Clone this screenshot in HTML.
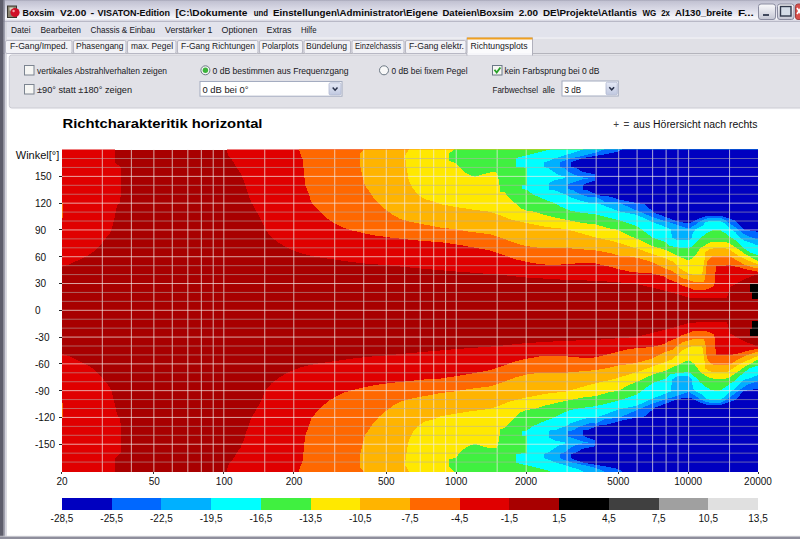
<!DOCTYPE html>
<html lang="de">
<head>
<meta charset="utf-8">
<title>Boxsim V2.00 - VISATON-Edition</title>
<style>
html,body{margin:0;padding:0;background:#fff;}
body{width:800px;height:539px;overflow:hidden;position:relative;font-family:"Liberation Sans",sans-serif;}
svg text{font-family:"Liberation Sans",sans-serif;fill:#000;}
.ax{font-size:10px;fill:#101010;}
.ui{font-size:8.6px;fill:#18181c;}
.ttl{font-size:9.5px;font-weight:bold;fill:#0a0a0a;}
.h1{font-size:13.4px;font-weight:bold;fill:#000;}
.note{font-size:10px;fill:#101010;}
</style>
</head>
<body>
<svg width="800" height="539" viewBox="0 0 800 539" style="position:absolute;left:0;top:0">
<defs>
<linearGradient id="tb" x1="0" y1="0" x2="0" y2="1">
<stop offset="0" stop-color="#a4a4b6"/><stop offset="0.06" stop-color="#c2c2d2"/><stop offset="0.3" stop-color="#d2d2e0"/><stop offset="0.6" stop-color="#e6e6f0"/><stop offset="0.85" stop-color="#f8f8fb"/><stop offset="0.93" stop-color="#dcdce6"/><stop offset="1" stop-color="#a8a8b8"/>
</linearGradient>
<linearGradient id="btn" x1="0" y1="0" x2="0" y2="1"><stop offset="0" stop-color="#fafafc"/><stop offset="1" stop-color="#c4c6d4"/></linearGradient>
<linearGradient id="ddb" x1="0" y1="0" x2="0" y2="1"><stop offset="0" stop-color="#e6eaf6"/><stop offset="1" stop-color="#c0c8e0"/></linearGradient>
</defs>
<!-- window background -->
<rect x="0" y="0" width="800" height="539" fill="#ffffff"/>
<!-- title bar -->
<rect x="0" y="0" width="800" height="22" fill="url(#tb)"/>
<!-- menu bar -->
<rect x="0" y="22" width="800" height="16" fill="#e2e3ec"/>
<rect x="0" y="37.5" width="800" height="1" fill="#f4f4f8"/>
<!-- tab strip -->
<rect x="0" y="38.5" width="800" height="15" fill="#e0e0e6"/>
<rect x="0" y="53" width="800" height="1" fill="#b4b4bc"/>
<rect x="0" y="54" width="800" height="56" fill="#fcfcfe"/>
<!-- panel -->
<rect x="9.3" y="55" width="800" height="53" rx="2.5" fill="#e1e1e7" stroke="#cacad2" stroke-width="1"/>
<!-- left border -->
<rect x="0" y="0" width="3.7" height="539" fill="#5e5e6c"/>
<rect x="3.7" y="0" width="1.2" height="539" fill="#9090a0"/>
<rect x="4.9" y="22" width="2" height="517" fill="#d6d6de"/>
<!-- bottom border -->
<rect x="0" y="535.8" width="800" height="1" fill="#d0d0d8"/>
<rect x="0" y="536.7" width="800" height="2.3" fill="#8e8e9c"/>

<!-- icon -->
<g>
<rect x="7.5" y="6" width="9" height="11.5" fill="#8a8470" stroke="#3a3830" stroke-width="1"/>
<rect x="9.5" y="7.5" width="4" height="3" fill="#d8d4c0"/>
<circle cx="15" cy="12.5" r="4.6" fill="#d01028"/>
<circle cx="13.6" cy="11" r="1.2" fill="#f8a0a8"/>
</g>
<text class="ttl" x="22.5" y="15.7" textLength="32" lengthAdjust="spacingAndGlyphs">Boxsim</text>
<text class="ttl" x="60" y="15.7" textLength="26.25" lengthAdjust="spacingAndGlyphs">V2.00</text>
<text class="ttl" x="90.5" y="15.7" textLength="3.75" lengthAdjust="spacingAndGlyphs">-</text>
<text class="ttl" x="97.5" y="15.7" textLength="72.5" lengthAdjust="spacingAndGlyphs">VISATON-Edition</text>
<text class="ttl" x="175.5" y="15.7" textLength="72" lengthAdjust="spacingAndGlyphs">[C:\Dokumente</text>
<text class="ttl" x="253.75" y="15.7" textLength="14.25" lengthAdjust="spacingAndGlyphs">und</text>
<text class="ttl" x="273" y="15.7" textLength="165" lengthAdjust="spacingAndGlyphs">Einstellungen\Administrator\Eigene</text>
<text class="ttl" x="442.5" y="15.7" textLength="71.25" lengthAdjust="spacingAndGlyphs">Dateien\Boxsim</text>
<text class="ttl" x="518.75" y="15.7" textLength="19.25" lengthAdjust="spacingAndGlyphs">2.00</text>
<text class="ttl" x="543" y="15.7" textLength="94" lengthAdjust="spacingAndGlyphs">DE\Projekte\Atlantis</text>
<text class="ttl" x="642.5" y="15.7" textLength="13.75" lengthAdjust="spacingAndGlyphs">WG</text>
<text class="ttl" x="661.25" y="15.7" textLength="8.75" lengthAdjust="spacingAndGlyphs">2x</text>
<text class="ttl" x="675" y="15.7" textLength="57.5" lengthAdjust="spacingAndGlyphs">Al130_breite</text>
<text class="ttl" x="738" y="15.7" textLength="15.75" lengthAdjust="spacingAndGlyphs">F...</text>
<!-- window buttons -->
<rect x="758.5" y="4" width="17" height="15.5" rx="2.5" fill="url(#btn)" stroke="#8a8ca0" stroke-width="1"/>
<rect x="763" y="14" width="6" height="2" fill="#40485c"/>
<rect x="777.5" y="4" width="16.5" height="15.5" rx="2.5" fill="url(#btn)" stroke="#8a8ca0" stroke-width="1"/>
<rect x="780.5" y="6.5" width="10.5" height="9.5" fill="#d4dce8" stroke="#30384c" stroke-width="1.4"/>
<rect x="795.5" y="4" width="10" height="15.5" rx="2.5" fill="#d8504c" stroke="#a04040" stroke-width="1"/>
<path d="M797 8 L801 14 M801 8 L797 14" stroke="#fff" stroke-width="1.6"/>

<!-- menu -->
<text class="ui" x="11" y="32.6" textLength="19.5" lengthAdjust="spacingAndGlyphs">Datei</text>
<text class="ui" x="40.5" y="32.6" textLength="40.5" lengthAdjust="spacingAndGlyphs">Bearbeiten</text>
<text class="ui" x="90.5" y="32.6" textLength="64.5" lengthAdjust="spacingAndGlyphs">Chassis &amp; Einbau</text>
<text class="ui" x="165" y="32.6" textLength="47.5" lengthAdjust="spacingAndGlyphs">Verstärker 1</text>
<text class="ui" x="221.5" y="32.6" textLength="36" lengthAdjust="spacingAndGlyphs">Optionen</text>
<text class="ui" x="266.5" y="32.6" textLength="25" lengthAdjust="spacingAndGlyphs">Extras</text>
<text class="ui" x="301" y="32.6" textLength="15.5" lengthAdjust="spacingAndGlyphs">Hilfe</text>

<!-- tabs -->
<g fill="#f2f2f6" stroke="#b8b8c4" stroke-width="1">
<rect x="5.5" y="40.5" width="66.5" height="13" rx="1.5"/>
<rect x="73.5" y="40.5" width="52.5" height="13" rx="1.5"/>
<rect x="127.5" y="40.5" width="48.5" height="13" rx="1.5"/>
<rect x="177.5" y="40.5" width="80.5" height="13" rx="1.5"/>
<rect x="259.5" y="40.5" width="43" height="13" rx="1.5"/>
<rect x="304" y="40.5" width="46.5" height="13" rx="1.5"/>
<rect x="352" y="40.5" width="52" height="13" rx="1.5"/>
<rect x="405.5" y="40.5" width="60.5" height="13" rx="1.5"/>
</g>
<rect x="467" y="38" width="65.5" height="17" fill="#fbfbfd" stroke="#b0b0bc" stroke-width="1"/>
<rect x="467" y="37.5" width="65.5" height="2" fill="#f0a020"/>
<rect x="467.5" y="53" width="64.5" height="2.5" fill="#f6f6fa"/>
<text class="ui" x="10" y="49.3" textLength="58" lengthAdjust="spacingAndGlyphs">F-Gang/Imped.</text>
<text class="ui" x="76" y="49.3" textLength="47.5" lengthAdjust="spacingAndGlyphs">Phasengang</text>
<text class="ui" x="131" y="49.3" textLength="42" lengthAdjust="spacingAndGlyphs">max. Pegel</text>
<text class="ui" x="181" y="49.3" textLength="74" lengthAdjust="spacingAndGlyphs">F-Gang Richtungen</text>
<text class="ui" x="262" y="49.3" textLength="36.5" lengthAdjust="spacingAndGlyphs">Polarplots</text>
<text class="ui" x="306" y="49.3" textLength="41" lengthAdjust="spacingAndGlyphs">Bündelung</text>
<text class="ui" x="355" y="49.3" textLength="46" lengthAdjust="spacingAndGlyphs">Einzelchassis</text>
<text class="ui" x="409" y="49.3" textLength="55" lengthAdjust="spacingAndGlyphs">F-Gang elektr.</text>
<text class="ui" x="470.5" y="48.8" textLength="57" lengthAdjust="spacingAndGlyphs">Richtungsplots</text>

<!-- controls -->
<rect x="24.5" y="65.5" width="9.5" height="9.5" fill="#f6f6f4" stroke="#7c8490" stroke-width="1"/>
<text class="ui" x="37" y="73.5" textLength="130" lengthAdjust="spacingAndGlyphs">vertikales Abstrahlverhalten zeigen</text>
<rect x="24.5" y="84.5" width="9.5" height="9.5" fill="#f6f6f4" stroke="#7c8490" stroke-width="1"/>
<text class="ui" x="37" y="92.9" textLength="95" lengthAdjust="spacingAndGlyphs">±90° statt ±180° zeigen</text>

<circle cx="205.4" cy="70.3" r="4.5" fill="#f4f6f4" stroke="#6c7884" stroke-width="1"/>
<circle cx="205.4" cy="70.3" r="2.7" fill="#3cb43c"/>
<text class="ui" x="212.5" y="73.5" textLength="136" lengthAdjust="spacingAndGlyphs">0 dB bestimmen aus Frequenzgang</text>
<rect x="200" y="81.5" width="142" height="14.7" fill="#ffffff" stroke="#a4acc0" stroke-width="1"/>
<rect x="329" y="82.8" width="12" height="12.2" rx="1.5" fill="url(#ddb)" stroke="#b0b8d0" stroke-width="0.8"/>
<path d="M332.7 87.6 L335.1 90.2 L337.5 87.6" fill="none" stroke="#283048" stroke-width="1.5"/>
<text class="ui" x="202.5" y="92.9" textLength="46" lengthAdjust="spacingAndGlyphs">0 dB bei 0°</text>

<circle cx="384" cy="70.3" r="4.5" fill="#f8f8f8" stroke="#6c7884" stroke-width="1"/>
<text class="ui" x="391.5" y="73.5" textLength="76" lengthAdjust="spacingAndGlyphs">0 dB bei fixem Pegel</text>

<rect x="492.5" y="65.5" width="9.5" height="9.5" fill="#f6f6f4" stroke="#6c7888" stroke-width="1"/>
<path d="M494.5 69.8 L496.7 72.6 L500.4 67.4" fill="none" stroke="#28a028" stroke-width="1.8"/>
<text class="ui" x="504.5" y="73.5" textLength="95" lengthAdjust="spacingAndGlyphs">kein Farbsprung bei 0 dB</text>
<text class="ui" x="492.5" y="92.5" textLength="62.5" lengthAdjust="spacingAndGlyphs" style="white-space:pre">Farbwechsel  alle</text>
<rect x="562" y="81" width="56.3" height="15" fill="#ffffff" stroke="#a4acc0" stroke-width="1"/>
<rect x="606" y="82.2" width="11.3" height="12.6" rx="1.5" fill="url(#ddb)" stroke="#b0b8d0" stroke-width="0.8"/>
<path d="M609.3 87.2 L611.7 89.8 L614.1 87.2" fill="none" stroke="#283048" stroke-width="1.5"/>
<text class="ui" x="564.5" y="92.5" textLength="16.5" lengthAdjust="spacingAndGlyphs">3 dB</text>

<!-- headings -->
<text class="h1" x="62.5" y="127.5" textLength="200" lengthAdjust="spacingAndGlyphs">Richtcharakteritik horizontal</text>
<text class="note" x="613.2" y="128.3" style="fill:#404040">+</text>
<text class="note" x="623.6" y="128.3" style="fill:#404040">=</text>
<text class="note" x="633.3" y="128.3" textLength="124.2" lengthAdjust="spacingAndGlyphs">aus Hörersicht nach rechts</text>
</svg>
<svg width="800" height="539" viewBox="0 0 800 539" style="position:absolute;left:0;top:0" shape-rendering="crispEdges">
<defs><clipPath id="pc"><rect x="62" y="149.5" width="696" height="322.4"/></clipPath></defs>
<g clip-path="url(#pc)">
<rect x="62" y="149.5" width="696" height="322.4" fill="#a80000"/>
<polygon points="114.5,147.5 114.5,149.5 115.5,163.0 120.5,167.0 121.0,176.0 121.0,193.0 120.0,202.0 117.0,206.0 116.0,211.0 114.0,220.0 112.0,228.0 110.0,233.0 106.0,238.0 100.0,245.5 95.0,250.5 87.5,255.5 77.5,260.5 70.0,264.0 62.0,267.0 60.0,267.0 60.0,147.5" fill="#e00000"/>
<polygon points="227.0,147.5 227.0,149.5 228.0,155.5 232.5,160.5 236.0,166.8 240.5,173.0 243.8,180.5 246.0,188.0 248.8,195.5 251.0,201.8 254.5,208.0 258.8,215.5 262.5,223.0 266.0,230.5 271.0,236.8 279.0,243.0 287.5,248.0 300.0,253.0 315.0,256.8 332.5,259.2 350.0,261.8 365.0,263.5 390.0,265.5 410.0,267.5 435.0,269.8 456.0,271.5 497.0,274.5 526.0,277.5 560.0,279.5 600.0,281.0 635.0,283.5 660.0,289.5 677.0,294.0 688.0,297.5 700.0,298.4 727.0,298.4 730.0,287.0 745.0,279.0 758.0,274.0 760.0,274.0 760.0,147.5" fill="#e00000"/>
<polygon points="298.8,147.5 298.8,149.5 301.0,155.5 303.0,160.5 303.8,173.0 305.5,185.5 308.8,194.0 311.0,201.8 315.0,206.8 320.0,211.8 325.0,216.8 330.0,220.5 336.0,224.2 343.8,228.0 352.5,230.5 362.5,233.0 375.0,235.5 390.0,237.5 405.0,239.2 422.5,241.0 440.0,242.0 455.0,244.2 470.0,246.8 490.0,250.5 505.0,255.5 515.0,259.2 526.0,261.8 540.0,264.2 552.0,265.0 567.0,264.2 580.0,263.0 590.0,262.5 596.0,263.5 610.0,266.8 619.0,269.2 630.0,271.8 640.0,272.7 652.0,273.5 664.5,276.7 668.0,279.0 677.5,282.8 682.5,285.7 688.5,287.7 694.0,289.8 705.0,289.8 710.0,288.0 714.3,285.7 716.0,266.0 729.5,265.3 738.0,267.0 746.0,269.4 754.0,271.0 758.0,271.8 760.0,271.8 760.0,147.5" fill="#ff6800"/>
<polygon points="60.0,203.0 63.2,203.0 63.2,218.0 60.0,218.0" fill="#ff6800"/>
<polygon points="363.8,147.5 363.8,149.5 360.0,153.0 360.0,165.0 361.8,173.0 365.0,185.5 369.5,191.8 373.8,198.0 378.8,203.5 383.8,208.0 388.8,211.8 393.8,215.5 400.0,218.8 410.0,221.8 420.0,223.8 430.0,225.5 440.0,227.5 455.0,229.2 470.0,231.8 490.0,234.2 505.0,239.2 515.0,243.0 526.0,246.0 540.0,248.0 567.0,248.0 580.0,249.2 596.0,250.5 610.0,253.0 619.0,255.5 630.0,256.5 640.0,258.5 652.0,262.0 659.6,266.0 665.6,268.6 672.6,271.0 677.5,275.0 682.4,278.4 688.5,280.0 694.0,282.0 703.7,282.0 705.3,277.5 706.0,269.4 707.0,262.0 710.0,258.0 713.5,255.5 728.0,255.5 731.4,257.0 738.0,261.2 746.0,265.3 754.0,267.8 758.0,268.6 760.0,268.6 760.0,147.5" fill="#ffb400"/>
<polygon points="408.8,147.5 408.8,149.5 405.0,155.5 406.0,165.0 408.8,180.5 412.5,188.0 417.5,194.2 425.0,199.2 435.0,201.8 440.0,204.2 455.0,206.8 470.0,209.2 490.0,211.8 497.5,214.2 510.0,219.2 526.0,223.0 545.0,226.8 567.0,229.2 580.0,233.0 596.0,237.5 610.0,240.5 619.0,243.0 630.0,246.5 640.0,249.5 652.0,254.0 659.6,256.5 665.6,258.5 672.6,261.5 677.5,266.0 682.4,270.2 688.5,273.5 694.0,275.0 702.0,275.0 703.0,269.4 704.5,259.6 705.3,252.2 708.6,249.8 713.5,248.2 725.0,248.2 729.5,249.8 738.0,255.5 746.0,259.6 754.0,262.9 758.0,264.5 760.0,264.5 760.0,147.5" fill="#ffe800"/>
<polygon points="453.8,147.5 453.8,149.5 448.8,154.0 448.8,161.0 456.0,163.0 458.8,166.8 463.8,171.8 470.0,175.0 475.0,176.8 482.5,174.2 490.0,172.5 496.0,172.2 498.0,175.5 499.5,185.0 500.0,191.5 505.0,192.5 506.5,195.0 511.0,199.5 515.0,203.0 520.0,208.0 526.0,210.5 535.0,211.8 545.0,215.0 557.5,218.0 570.0,220.5 582.5,223.0 596.0,224.5 607.5,228.0 618.5,230.0 630.0,236.0 637.0,238.8 652.5,246.0 665.6,250.0 677.5,255.5 682.4,258.0 688.5,260.4 694.0,257.0 697.0,253.0 700.4,248.2 705.3,245.0 710.0,242.4 716.7,241.6 725.0,241.6 729.5,243.3 738.0,249.0 746.0,254.7 754.0,258.8 758.0,261.2 760.0,261.2 760.0,147.5" fill="#40f040"/>
<polygon points="550.0,147.5 550.0,149.5 533.8,153.6 515.6,158.0 515.6,166.8 520.6,167.0 527.0,168.0 527.0,185.0 522.0,185.1 522.0,189.0 527.0,190.0 532.5,194.2 541.0,198.0 547.5,200.5 553.8,203.0 561.0,206.8 570.0,210.5 580.0,212.5 596.0,214.5 618.5,220.0 637.0,226.2 645.0,232.0 652.5,237.5 665.6,242.0 670.0,246.0 677.5,247.5 688.5,248.5 692.5,246.0 697.5,241.2 701.0,237.5 706.0,233.8 711.0,230.6 715.0,230.0 720.0,230.0 725.0,233.0 730.0,236.9 735.0,240.0 738.8,243.8 743.8,248.0 750.0,252.5 758.0,255.0 760.0,255.0 760.0,147.5" fill="#00ffff"/>
<polygon points="583.0,147.5 583.0,149.5 576.0,152.0 569.5,153.8 563.0,156.0 553.8,158.6 550.0,160.5 543.8,162.4 543.8,166.8 549.0,168.6 553.8,171.8 558.8,175.0 565.0,176.5 565.0,178.0 555.0,180.0 550.0,182.4 549.4,183.0 549.4,190.0 555.0,190.5 565.0,194.2 571.0,197.4 580.0,200.5 590.0,203.0 596.0,203.0 605.0,206.0 618.5,211.2 637.0,215.0 652.5,222.0 665.6,227.0 670.5,229.0 672.5,238.0 677.5,240.0 688.5,240.0 691.5,238.5 693.0,232.0 695.5,229.5 702.5,225.6 706.0,221.9 711.0,220.6 720.0,220.6 725.0,223.8 730.0,228.8 735.0,231.9 738.8,236.2 743.8,240.6 750.0,242.5 758.0,245.6 760.0,245.6 760.0,147.5" fill="#00b0ff"/>
<polygon points="604.0,147.5 604.0,149.5 595.0,152.8 586.0,155.0 577.5,157.0 570.0,158.6 565.0,160.5 560.0,162.4 560.0,166.8 565.0,168.6 568.8,171.8 575.0,175.0 582.5,177.4 590.0,178.3 582.5,179.2 575.0,181.8 568.0,184.0 568.0,189.0 573.8,190.5 580.0,194.2 590.0,197.4 596.0,197.0 600.0,199.2 605.0,201.8 618.5,202.5 637.0,210.6 652.5,217.0 665.6,221.2 677.5,225.0 688.5,228.8 695.0,225.0 700.0,221.2 706.0,218.8 711.0,217.5 720.0,217.5 725.0,220.0 730.0,223.8 735.0,227.0 738.8,230.0 743.8,233.8 750.0,236.9 758.0,239.4 760.0,239.4 760.0,147.5" fill="#0068ff"/>
<polygon points="622.0,147.5 622.0,149.5 616.0,152.2 604.0,154.5 590.0,156.8 581.0,158.6 576.0,160.5 571.0,162.4 571.0,166.8 576.0,168.0 582.5,171.8 595.0,174.2 595.0,180.5 587.5,183.0 582.5,185.0 582.5,190.0 587.5,190.5 595.0,193.6 600.0,195.5 605.0,195.5 615.0,198.0 618.5,199.4 630.0,201.8 637.0,203.0 645.0,204.2 650.0,209.2 652.5,210.6 655.0,213.0 665.0,216.8 675.0,220.5 685.0,223.0 690.0,223.0 695.0,220.5 700.0,218.0 707.5,215.5 720.0,215.5 727.5,218.0 735.0,220.5 740.0,225.6 743.8,229.4 750.0,230.6 758.0,231.9 760.0,231.9 760.0,147.5" fill="#0000c0"/>
<polygon points="749.7,284.3 760.0,284.3 760.0,299.2 752.4,299.2 752.4,291.5 749.7,291.5" fill="#000000"/>
<polygon points="114.5,473.1 114.5,471.1 115.5,457.6 120.5,453.6 121.0,444.6 121.0,427.6 120.0,418.6 117.0,414.6 116.0,409.6 114.0,400.6 112.0,392.6 110.0,387.6 106.0,382.6 100.0,375.1 95.0,370.1 87.5,365.1 77.5,360.1 70.0,356.6 62.0,353.6 60.0,353.6 60.0,473.1" fill="#e00000"/>
<polygon points="227.0,473.1 227.0,471.1 228.0,465.1 232.5,460.1 236.0,453.9 240.5,447.6 243.8,440.1 246.0,432.6 248.8,425.1 251.0,418.9 254.5,412.6 258.8,405.1 262.5,397.6 266.0,390.1 271.0,383.9 279.0,377.6 287.5,372.6 300.0,367.6 315.0,363.9 332.5,361.4 350.0,358.9 365.0,357.1 390.0,355.1 410.0,353.1 435.0,350.9 456.0,349.1 497.0,346.1 526.0,343.1 560.0,341.1 600.0,339.6 635.0,337.1 660.0,331.1 677.0,326.6 688.0,323.1 700.0,322.2 727.0,322.2 730.0,333.6 745.0,341.6 758.0,346.6 760.0,346.6 760.0,473.1" fill="#e00000"/>
<polygon points="298.8,473.1 298.8,471.1 301.0,465.1 303.0,460.1 303.8,447.6 305.5,435.1 308.8,426.6 311.0,418.9 315.0,413.9 320.0,408.9 325.0,403.9 330.0,400.1 336.0,396.4 343.8,392.6 352.5,390.1 362.5,387.6 375.0,385.1 390.0,383.1 405.0,381.4 422.5,379.6 440.0,378.6 455.0,376.4 470.0,373.9 490.0,370.1 505.0,365.1 515.0,361.4 526.0,358.9 540.0,356.4 552.0,355.6 567.0,356.4 580.0,357.6 590.0,358.1 596.0,357.1 610.0,353.9 619.0,351.4 630.0,348.9 640.0,347.9 652.0,347.1 664.5,343.9 668.0,341.6 677.5,337.8 682.5,334.9 688.5,332.9 694.0,330.8 705.0,330.8 710.0,332.6 714.3,334.9 716.0,354.6 729.5,355.3 738.0,353.6 746.0,351.2 754.0,349.6 758.0,348.8 760.0,348.8 760.0,473.1" fill="#ff6800"/>
<polygon points="60.0,417.6 63.2,417.6 63.2,402.6 60.0,402.6" fill="#ff6800"/>
<polygon points="363.8,473.1 363.8,471.1 360.0,467.6 360.0,455.6 361.8,447.6 365.0,435.1 369.5,428.9 373.8,422.6 378.8,417.1 383.8,412.6 388.8,408.9 393.8,405.1 400.0,401.9 410.0,398.9 420.0,396.9 430.0,395.1 440.0,393.1 455.0,391.4 470.0,388.9 490.0,386.4 505.0,381.4 515.0,377.6 526.0,374.6 540.0,372.6 567.0,372.6 580.0,371.4 596.0,370.1 610.0,367.6 619.0,365.1 630.0,364.1 640.0,362.1 652.0,358.6 659.6,354.6 665.6,352.0 672.6,349.6 677.5,345.6 682.4,342.2 688.5,340.6 694.0,338.6 703.7,338.6 705.3,343.1 706.0,351.2 707.0,358.6 710.0,362.6 713.5,365.1 728.0,365.1 731.4,363.6 738.0,359.4 746.0,355.3 754.0,352.8 758.0,352.0 760.0,352.0 760.0,473.1" fill="#ffb400"/>
<polygon points="408.8,473.1 408.8,471.1 405.0,465.1 406.0,455.6 408.8,440.1 412.5,432.6 417.5,426.4 425.0,421.4 435.0,418.9 440.0,416.4 455.0,413.9 470.0,411.4 490.0,408.9 497.5,406.4 510.0,401.4 526.0,397.6 545.0,393.9 567.0,391.4 580.0,387.6 596.0,383.1 610.0,380.1 619.0,377.6 630.0,374.1 640.0,371.1 652.0,366.6 659.6,364.1 665.6,362.1 672.6,359.1 677.5,354.6 682.4,350.4 688.5,347.1 694.0,345.6 702.0,345.6 703.0,351.2 704.5,361.0 705.3,368.4 708.6,370.8 713.5,372.4 725.0,372.4 729.5,370.8 738.0,365.1 746.0,361.0 754.0,357.7 758.0,356.1 760.0,356.1 760.0,473.1" fill="#ffe800"/>
<polygon points="453.8,473.1 453.8,471.1 448.8,466.6 448.8,459.6 456.0,457.6 458.8,453.9 463.8,448.9 470.0,445.6 475.0,443.9 482.5,446.4 490.0,448.1 496.0,448.4 498.0,445.1 499.5,435.6 500.0,429.1 505.0,428.1 506.5,425.6 511.0,421.1 515.0,417.6 520.0,412.6 526.0,410.1 535.0,408.9 545.0,405.6 557.5,402.6 570.0,400.1 582.5,397.6 596.0,396.1 607.5,392.6 618.5,390.6 630.0,384.6 637.0,381.9 652.5,374.6 665.6,370.6 677.5,365.1 682.4,362.6 688.5,360.2 694.0,363.6 697.0,367.6 700.4,372.4 705.3,375.6 710.0,378.2 716.7,379.0 725.0,379.0 729.5,377.3 738.0,371.6 746.0,365.9 754.0,361.8 758.0,359.4 760.0,359.4 760.0,473.1" fill="#40f040"/>
<polygon points="550.0,473.1 550.0,471.1 533.8,467.0 515.6,462.6 515.6,453.9 520.6,453.6 527.0,452.6 527.0,435.6 522.0,435.5 522.0,431.6 527.0,430.6 532.5,426.4 541.0,422.6 547.5,420.1 553.8,417.6 561.0,413.9 570.0,410.1 580.0,408.1 596.0,406.1 618.5,400.6 637.0,394.4 645.0,388.6 652.5,383.1 665.6,378.6 670.0,374.6 677.5,373.1 688.5,372.1 692.5,374.6 697.5,379.4 701.0,383.1 706.0,386.9 711.0,390.0 715.0,390.6 720.0,390.6 725.0,387.6 730.0,383.7 735.0,380.6 738.8,376.9 743.8,372.6 750.0,368.1 758.0,365.6 760.0,365.6 760.0,473.1" fill="#00ffff"/>
<polygon points="583.0,473.1 583.0,471.1 576.0,468.6 569.5,466.8 563.0,464.6 553.8,462.0 550.0,460.1 543.8,458.2 543.8,453.9 549.0,452.0 553.8,448.9 558.8,445.6 565.0,444.1 565.0,442.6 555.0,440.6 550.0,438.2 549.4,437.6 549.4,430.6 555.0,430.1 565.0,426.4 571.0,423.2 580.0,420.1 590.0,417.6 596.0,417.6 605.0,414.6 618.5,409.4 637.0,405.6 652.5,398.6 665.6,393.6 670.5,391.6 672.5,379.1 677.5,376.2 688.5,376.2 691.5,378.6 693.0,388.6 695.5,391.1 702.5,395.0 706.0,398.7 711.0,400.0 720.0,400.0 725.0,396.9 730.0,391.9 735.0,388.7 738.8,384.4 743.8,380.0 750.0,378.1 758.0,375.0 760.0,375.0 760.0,473.1" fill="#00b0ff"/>
<polygon points="604.0,473.1 604.0,471.1 595.0,467.8 586.0,465.6 577.5,463.6 570.0,462.0 565.0,460.1 560.0,458.2 560.0,453.9 565.0,452.0 568.8,448.9 575.0,445.6 582.5,443.2 590.0,442.3 582.5,441.4 575.0,438.9 568.0,436.6 568.0,431.6 573.8,430.1 580.0,426.4 590.0,423.2 596.0,423.6 600.0,421.4 605.0,418.9 618.5,418.1 637.0,410.0 652.5,403.6 665.6,399.4 677.5,395.6 688.5,391.9 695.0,395.6 700.0,399.4 706.0,401.9 711.0,403.1 720.0,403.1 725.0,400.6 730.0,396.9 735.0,393.6 738.8,390.6 743.8,386.9 750.0,383.7 758.0,381.2 760.0,381.2 760.0,473.1" fill="#0068ff"/>
<polygon points="622.0,473.1 622.0,471.1 616.0,468.4 604.0,466.1 590.0,463.9 581.0,462.0 576.0,460.1 571.0,458.2 571.0,453.9 576.0,452.6 582.5,448.9 595.0,446.4 595.0,440.1 587.5,437.6 582.5,435.6 582.5,430.6 587.5,430.1 595.0,427.0 600.0,425.1 605.0,425.1 615.0,422.6 618.5,421.2 630.0,418.9 637.0,417.6 645.0,416.4 650.0,411.4 652.5,410.0 655.0,407.6 665.0,403.9 675.0,400.1 685.0,397.6 690.0,397.6 695.0,400.1 700.0,402.6 707.5,405.1 720.0,405.1 727.5,402.6 735.0,400.1 740.0,395.0 743.8,391.2 750.0,390.0 758.0,388.7 760.0,388.7 760.0,473.1" fill="#0000c0"/>
<polygon points="749.7,336.3 760.0,336.3 760.0,321.4 752.4,321.4 752.4,329.1 749.7,329.1" fill="#000000"/>
</g>
<line x1="102.32" y1="149.5" x2="102.32" y2="471.9" stroke="rgba(240,236,232,0.8)" stroke-width="0.9" shape-rendering="auto"/>
<line x1="131.36" y1="149.5" x2="131.36" y2="471.9" stroke="rgba(240,236,232,0.8)" stroke-width="0.9" shape-rendering="auto"/>
<line x1="153.88" y1="149.5" x2="153.88" y2="471.9" stroke="rgba(240,236,232,0.8)" stroke-width="0.9" shape-rendering="auto"/>
<line x1="172.28" y1="149.5" x2="172.28" y2="471.9" stroke="rgba(240,236,232,0.8)" stroke-width="0.9" shape-rendering="auto"/>
<line x1="187.84" y1="149.5" x2="187.84" y2="471.9" stroke="rgba(240,236,232,0.8)" stroke-width="0.9" shape-rendering="auto"/>
<line x1="201.32" y1="149.5" x2="201.32" y2="471.9" stroke="rgba(240,236,232,0.8)" stroke-width="0.9" shape-rendering="auto"/>
<line x1="213.21" y1="149.5" x2="213.21" y2="471.9" stroke="rgba(240,236,232,0.8)" stroke-width="0.9" shape-rendering="auto"/>
<line x1="223.84" y1="149.5" x2="223.84" y2="471.9" stroke="rgba(240,236,232,0.8)" stroke-width="0.9" shape-rendering="auto"/>
<line x1="264.76" y1="149.5" x2="264.76" y2="471.9" stroke="rgba(240,236,232,0.8)" stroke-width="0.9" shape-rendering="auto"/>
<line x1="293.80" y1="149.5" x2="293.80" y2="471.9" stroke="rgba(240,236,232,0.8)" stroke-width="0.9" shape-rendering="auto"/>
<line x1="334.72" y1="149.5" x2="334.72" y2="471.9" stroke="rgba(240,236,232,0.8)" stroke-width="0.9" shape-rendering="auto"/>
<line x1="363.76" y1="149.5" x2="363.76" y2="471.9" stroke="rgba(240,236,232,0.8)" stroke-width="0.9" shape-rendering="auto"/>
<line x1="386.28" y1="149.5" x2="386.28" y2="471.9" stroke="rgba(240,236,232,0.8)" stroke-width="0.9" shape-rendering="auto"/>
<line x1="404.68" y1="149.5" x2="404.68" y2="471.9" stroke="rgba(240,236,232,0.8)" stroke-width="0.9" shape-rendering="auto"/>
<line x1="420.24" y1="149.5" x2="420.24" y2="471.9" stroke="rgba(240,236,232,0.8)" stroke-width="0.9" shape-rendering="auto"/>
<line x1="433.72" y1="149.5" x2="433.72" y2="471.9" stroke="rgba(240,236,232,0.8)" stroke-width="0.9" shape-rendering="auto"/>
<line x1="445.61" y1="149.5" x2="445.61" y2="471.9" stroke="rgba(240,236,232,0.8)" stroke-width="0.9" shape-rendering="auto"/>
<line x1="456.24" y1="149.5" x2="456.24" y2="471.9" stroke="rgba(240,236,232,0.8)" stroke-width="0.9" shape-rendering="auto"/>
<line x1="497.16" y1="149.5" x2="497.16" y2="471.9" stroke="rgba(240,236,232,0.8)" stroke-width="0.9" shape-rendering="auto"/>
<line x1="526.20" y1="149.5" x2="526.20" y2="471.9" stroke="rgba(240,236,232,0.8)" stroke-width="0.9" shape-rendering="auto"/>
<line x1="567.12" y1="149.5" x2="567.12" y2="471.9" stroke="rgba(240,236,232,0.8)" stroke-width="0.9" shape-rendering="auto"/>
<line x1="596.16" y1="149.5" x2="596.16" y2="471.9" stroke="rgba(240,236,232,0.8)" stroke-width="0.9" shape-rendering="auto"/>
<line x1="618.68" y1="149.5" x2="618.68" y2="471.9" stroke="rgba(240,236,232,0.8)" stroke-width="0.9" shape-rendering="auto"/>
<line x1="637.08" y1="149.5" x2="637.08" y2="471.9" stroke="rgba(240,236,232,0.8)" stroke-width="0.9" shape-rendering="auto"/>
<line x1="652.64" y1="149.5" x2="652.64" y2="471.9" stroke="rgba(240,236,232,0.8)" stroke-width="0.9" shape-rendering="auto"/>
<line x1="666.12" y1="149.5" x2="666.12" y2="471.9" stroke="rgba(240,236,232,0.8)" stroke-width="0.9" shape-rendering="auto"/>
<line x1="678.01" y1="149.5" x2="678.01" y2="471.9" stroke="rgba(240,236,232,0.8)" stroke-width="0.9" shape-rendering="auto"/>
<line x1="688.64" y1="149.5" x2="688.64" y2="471.9" stroke="rgba(240,236,232,0.8)" stroke-width="0.9" shape-rendering="auto"/>
<line x1="729.56" y1="149.5" x2="729.56" y2="471.9" stroke="rgba(240,236,232,0.8)" stroke-width="0.9" shape-rendering="auto"/>
<line x1="62" y1="462.076" x2="758" y2="462.076" stroke="rgba(180,176,172,0.62)" stroke-width="0.9" shape-rendering="auto"/>
<line x1="62" y1="453.148" x2="758" y2="453.148" stroke="rgba(180,176,172,0.62)" stroke-width="0.9" shape-rendering="auto"/>
<line x1="62" y1="444.22" x2="758" y2="444.22" stroke="rgba(240,236,232,0.78)" stroke-width="0.9" shape-rendering="auto"/>
<line x1="62" y1="435.292" x2="758" y2="435.292" stroke="rgba(180,176,172,0.62)" stroke-width="0.9" shape-rendering="auto"/>
<line x1="62" y1="426.364" x2="758" y2="426.364" stroke="rgba(180,176,172,0.62)" stroke-width="0.9" shape-rendering="auto"/>
<line x1="62" y1="417.436" x2="758" y2="417.436" stroke="rgba(240,236,232,0.78)" stroke-width="0.9" shape-rendering="auto"/>
<line x1="62" y1="408.508" x2="758" y2="408.508" stroke="rgba(180,176,172,0.62)" stroke-width="0.9" shape-rendering="auto"/>
<line x1="62" y1="399.58" x2="758" y2="399.58" stroke="rgba(180,176,172,0.62)" stroke-width="0.9" shape-rendering="auto"/>
<line x1="62" y1="390.652" x2="758" y2="390.652" stroke="rgba(240,236,232,0.78)" stroke-width="0.9" shape-rendering="auto"/>
<line x1="62" y1="381.724" x2="758" y2="381.724" stroke="rgba(180,176,172,0.62)" stroke-width="0.9" shape-rendering="auto"/>
<line x1="62" y1="372.796" x2="758" y2="372.796" stroke="rgba(180,176,172,0.62)" stroke-width="0.9" shape-rendering="auto"/>
<line x1="62" y1="363.868" x2="758" y2="363.868" stroke="rgba(240,236,232,0.78)" stroke-width="0.9" shape-rendering="auto"/>
<line x1="62" y1="354.94" x2="758" y2="354.94" stroke="rgba(180,176,172,0.62)" stroke-width="0.9" shape-rendering="auto"/>
<line x1="62" y1="346.012" x2="758" y2="346.012" stroke="rgba(180,176,172,0.62)" stroke-width="0.9" shape-rendering="auto"/>
<line x1="62" y1="337.084" x2="758" y2="337.084" stroke="rgba(240,236,232,0.78)" stroke-width="0.9" shape-rendering="auto"/>
<line x1="62" y1="328.156" x2="758" y2="328.156" stroke="rgba(180,176,172,0.62)" stroke-width="0.9" shape-rendering="auto"/>
<line x1="62" y1="319.228" x2="758" y2="319.228" stroke="rgba(180,176,172,0.62)" stroke-width="0.9" shape-rendering="auto"/>
<line x1="62" y1="310.3" x2="758" y2="310.3" stroke="rgba(240,236,232,0.78)" stroke-width="0.9" shape-rendering="auto"/>
<line x1="62" y1="301.372" x2="758" y2="301.372" stroke="rgba(180,176,172,0.62)" stroke-width="0.9" shape-rendering="auto"/>
<line x1="62" y1="292.444" x2="758" y2="292.444" stroke="rgba(180,176,172,0.62)" stroke-width="0.9" shape-rendering="auto"/>
<line x1="62" y1="283.516" x2="758" y2="283.516" stroke="rgba(240,236,232,0.78)" stroke-width="0.9" shape-rendering="auto"/>
<line x1="62" y1="274.588" x2="758" y2="274.588" stroke="rgba(180,176,172,0.62)" stroke-width="0.9" shape-rendering="auto"/>
<line x1="62" y1="265.66" x2="758" y2="265.66" stroke="rgba(180,176,172,0.62)" stroke-width="0.9" shape-rendering="auto"/>
<line x1="62" y1="256.732" x2="758" y2="256.732" stroke="rgba(240,236,232,0.78)" stroke-width="0.9" shape-rendering="auto"/>
<line x1="62" y1="247.804" x2="758" y2="247.804" stroke="rgba(180,176,172,0.62)" stroke-width="0.9" shape-rendering="auto"/>
<line x1="62" y1="238.876" x2="758" y2="238.876" stroke="rgba(180,176,172,0.62)" stroke-width="0.9" shape-rendering="auto"/>
<line x1="62" y1="229.948" x2="758" y2="229.948" stroke="rgba(240,236,232,0.78)" stroke-width="0.9" shape-rendering="auto"/>
<line x1="62" y1="221.02" x2="758" y2="221.02" stroke="rgba(180,176,172,0.62)" stroke-width="0.9" shape-rendering="auto"/>
<line x1="62" y1="212.092" x2="758" y2="212.092" stroke="rgba(180,176,172,0.62)" stroke-width="0.9" shape-rendering="auto"/>
<line x1="62" y1="203.164" x2="758" y2="203.164" stroke="rgba(240,236,232,0.78)" stroke-width="0.9" shape-rendering="auto"/>
<line x1="62" y1="194.236" x2="758" y2="194.236" stroke="rgba(180,176,172,0.62)" stroke-width="0.9" shape-rendering="auto"/>
<line x1="62" y1="185.308" x2="758" y2="185.308" stroke="rgba(180,176,172,0.62)" stroke-width="0.9" shape-rendering="auto"/>
<line x1="62" y1="176.38" x2="758" y2="176.38" stroke="rgba(240,236,232,0.78)" stroke-width="0.9" shape-rendering="auto"/>
<line x1="62" y1="167.452" x2="758" y2="167.452" stroke="rgba(180,176,172,0.62)" stroke-width="0.9" shape-rendering="auto"/>
<line x1="62" y1="158.524" x2="758" y2="158.524" stroke="rgba(180,176,172,0.62)" stroke-width="0.9" shape-rendering="auto"/>
<line x1="59.3" y1="444.5" x2="61.5" y2="444.5" stroke="#222" stroke-width="1"/>
<text x="35" y="448.0" class="ax">-150</text>
<line x1="59.3" y1="417.5" x2="61.5" y2="417.5" stroke="#222" stroke-width="1"/>
<text x="35" y="421.2" class="ax">-120</text>
<line x1="59.3" y1="390.5" x2="61.5" y2="390.5" stroke="#222" stroke-width="1"/>
<text x="35" y="394.5" class="ax">-90</text>
<line x1="59.3" y1="363.5" x2="61.5" y2="363.5" stroke="#222" stroke-width="1"/>
<text x="35" y="367.7" class="ax">-60</text>
<line x1="59.3" y1="337.5" x2="61.5" y2="337.5" stroke="#222" stroke-width="1"/>
<text x="35" y="340.9" class="ax">-30</text>
<line x1="59.3" y1="310.5" x2="61.5" y2="310.5" stroke="#222" stroke-width="1"/>
<text x="35" y="314.1" class="ax">0</text>
<line x1="59.3" y1="283.5" x2="61.5" y2="283.5" stroke="#222" stroke-width="1"/>
<text x="35" y="287.3" class="ax">30</text>
<line x1="59.3" y1="256.5" x2="61.5" y2="256.5" stroke="#222" stroke-width="1"/>
<text x="35" y="260.5" class="ax">60</text>
<line x1="59.3" y1="229.5" x2="61.5" y2="229.5" stroke="#222" stroke-width="1"/>
<text x="35" y="233.7" class="ax">90</text>
<line x1="59.3" y1="203.5" x2="61.5" y2="203.5" stroke="#222" stroke-width="1"/>
<text x="35" y="207.0" class="ax">120</text>
<line x1="59.3" y1="176.5" x2="61.5" y2="176.5" stroke="#222" stroke-width="1"/>
<text x="35" y="180.2" class="ax">150</text>
<text x="15.8" y="158.9" class="ax" style="font-size:10.4px" textLength="43.5" lengthAdjust="spacingAndGlyphs">Winkel[°]</text>
<rect x="60.9" y="471.9" width="1" height="2" fill="#333"/>
<text x="62.0" y="485.2" text-anchor="middle" class="ax">20</text>
<rect x="153.4" y="471.9" width="1" height="2" fill="#333"/>
<text x="154.3" y="485.2" text-anchor="middle" class="ax">50</text>
<rect x="223.3" y="471.9" width="1" height="2" fill="#333"/>
<text x="224.2" y="485.2" text-anchor="middle" class="ax">100</text>
<rect x="293.3" y="471.9" width="1" height="2" fill="#333"/>
<text x="294.0" y="485.2" text-anchor="middle" class="ax">200</text>
<rect x="385.8" y="471.9" width="1" height="2" fill="#333"/>
<text x="386.3" y="485.2" text-anchor="middle" class="ax">500</text>
<rect x="455.7" y="471.9" width="1" height="2" fill="#333"/>
<text x="456.2" y="485.2" text-anchor="middle" class="ax">1000</text>
<rect x="525.7" y="471.9" width="1" height="2" fill="#333"/>
<text x="526.0" y="485.2" text-anchor="middle" class="ax">2000</text>
<rect x="618.2" y="471.9" width="1" height="2" fill="#333"/>
<text x="618.3" y="485.2" text-anchor="middle" class="ax">5000</text>
<rect x="688.1" y="471.9" width="1" height="2" fill="#333"/>
<text x="688.2" y="485.2" text-anchor="middle" class="ax">10000</text>
<rect x="758.1" y="471.9" width="1" height="2" fill="#333"/>
<text x="758.0" y="485.2" text-anchor="middle" class="ax">20000</text>
<rect x="62.00" y="497.6" width="50.01" height="12.8" fill="#0000c0"/>
<rect x="111.71" y="497.6" width="50.01" height="12.8" fill="#0068ff"/>
<rect x="161.43" y="497.6" width="50.01" height="12.8" fill="#00b0ff"/>
<rect x="211.14" y="497.6" width="50.01" height="12.8" fill="#00ffff"/>
<rect x="260.86" y="497.6" width="50.01" height="12.8" fill="#40f040"/>
<rect x="310.57" y="497.6" width="50.01" height="12.8" fill="#ffe800"/>
<rect x="360.29" y="497.6" width="50.01" height="12.8" fill="#ffb400"/>
<rect x="410.00" y="497.6" width="50.01" height="12.8" fill="#ff6800"/>
<rect x="459.71" y="497.6" width="50.01" height="12.8" fill="#e00000"/>
<rect x="509.43" y="497.6" width="50.01" height="12.8" fill="#a80000"/>
<rect x="559.14" y="497.6" width="50.01" height="12.8" fill="#000000"/>
<rect x="608.86" y="497.6" width="50.01" height="12.8" fill="#404040"/>
<rect x="658.57" y="497.6" width="50.01" height="12.8" fill="#a0a0a0"/>
<rect x="708.29" y="497.6" width="50.01" height="12.8" fill="#e0e0e0"/>
<text x="62.0" y="522.4" text-anchor="middle" class="ax">-28,5</text>
<text x="111.7" y="522.4" text-anchor="middle" class="ax">-25,5</text>
<text x="161.4" y="522.4" text-anchor="middle" class="ax">-22,5</text>
<text x="211.1" y="522.4" text-anchor="middle" class="ax">-19,5</text>
<text x="260.9" y="522.4" text-anchor="middle" class="ax">-16,5</text>
<text x="310.6" y="522.4" text-anchor="middle" class="ax">-13,5</text>
<text x="360.3" y="522.4" text-anchor="middle" class="ax">-10,5</text>
<text x="410.0" y="522.4" text-anchor="middle" class="ax">-7,5</text>
<text x="459.7" y="522.4" text-anchor="middle" class="ax">-4,5</text>
<text x="509.4" y="522.4" text-anchor="middle" class="ax">-1,5</text>
<text x="559.1" y="522.4" text-anchor="middle" class="ax">1,5</text>
<text x="608.9" y="522.4" text-anchor="middle" class="ax">4,5</text>
<text x="658.6" y="522.4" text-anchor="middle" class="ax">7,5</text>
<text x="708.3" y="522.4" text-anchor="middle" class="ax">10,5</text>
<text x="758.0" y="522.4" text-anchor="middle" class="ax">13,5</text>
</svg>
</body>
</html>
